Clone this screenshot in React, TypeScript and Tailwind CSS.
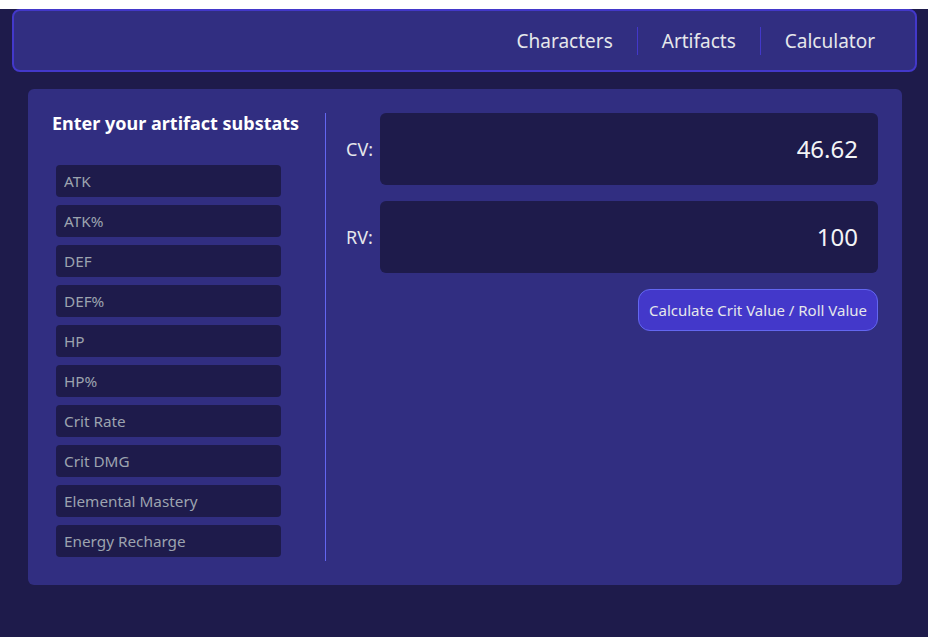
const stats = [
  "ATK",
  "ATK%",
  "DEF",
  "DEF%",
  "HP",
  "HP%",
  "Crit Rate",
  "Crit DMG",
  "Elemental Mastery",
  "Energy Recharge",
];

function NavBar() {
  const links = ["Characters", "Artifacts", "Calculator"];
  return (
    <header className="ml-3 mr-[11px] mt-[9px] flex h-[63px] items-center justify-end rounded-lg border-2 border-[#4338ca] bg-[#312e81] pr-4">
      {links.map((link, i) => (
        <div key={link} className="flex items-center">
          {i > 0 && <span className="h-7 w-px bg-[#4338ca]" />}
          <a className="px-6 pt-[2px] text-[19px] text-[#e5e7eb]">{link}</a>
        </div>
      ))}
    </header>
  );
}

function ResultRow({ label, value }: { label: string; value: string }) {
  return (
    <div className="flex items-center gap-1">
      <span className="w-[30px] text-lg text-[#e5e7eb]">{label}</span>
      <div className="flex h-[72px] flex-1 items-center justify-end rounded-md bg-[#1e1b4b] pr-5 text-2xl text-[#f3f4f6]">
        {value}
      </div>
    </div>
  );
}

export default function App() {
  return (
    <div
      className="min-h-[637px] bg-[#1e1b4b] pb-[52px]"
      style={{ fontFamily: '"Noto Sans", "Open Sans", sans-serif' }}
    >
      <NavBar />
      <main className="ml-7 mr-[26px] mt-[17px] flex rounded-md bg-[#312e81] p-6">
        <section className="w-[274px] shrink-0 border-r border-[#6366f1] pb-1 pr-6">
          <h2 className="-mt-1 text-lg font-bold text-white">Enter your artifact substats</h2>
          <div className="mt-[28px] flex flex-col gap-2 pl-[4px]">
            {stats.map((s) => (
              <input
                key={s}
                placeholder={s}
                className="h-8 w-[225px] rounded bg-[#1e1b4b] px-2 text-[15.3px] text-white placeholder:text-[#9ca3af] outline-none"
              />
            ))}
          </div>
        </section>
        <section className="flex flex-1 flex-col gap-4 pl-5">
          <ResultRow label="CV:" value="46.62" />
          <ResultRow label="RV:" value="100" />
          <div className="flex justify-end">
            <button className="h-[42px] rounded-xl border border-[#6366f1] bg-[#4338ca] px-[10px] text-[15px] text-[#e5e7eb]">
              Calculate Crit Value / Roll Value
            </button>
          </div>
        </section>
      </main>
    </div>
  );
}
